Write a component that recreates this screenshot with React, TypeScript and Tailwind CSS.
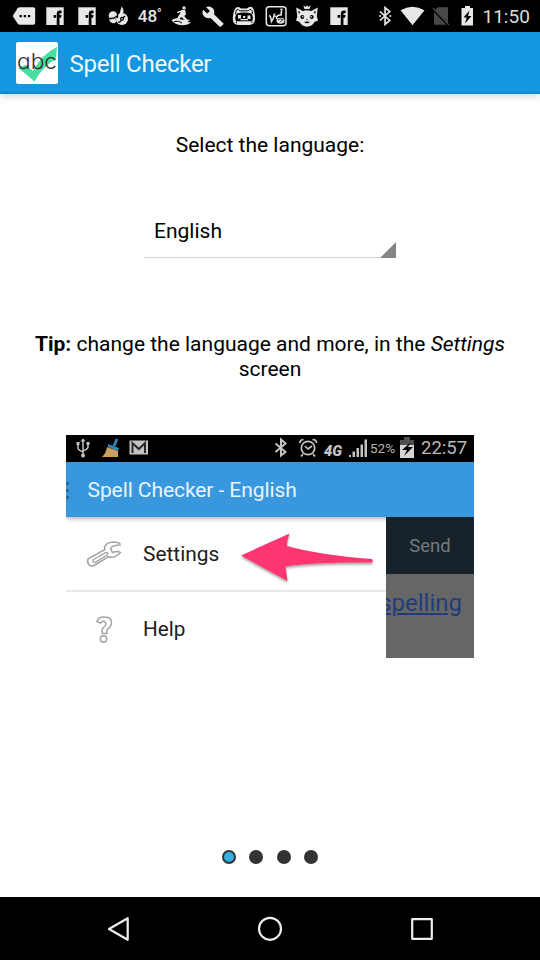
import type { ReactNode } from "react";

const INK = "#e8e8e8";

function Glyph({ children }: { children: ReactNode }) {
  return (
    <div className="flex w-[31.5px] shrink-0 justify-center">
      <svg width="24" height="24" viewBox="0 0 24 24" fill={INK}>
        {children}
      </svg>
    </div>
  );
}

function FacebookGlyph() {
  return (
    <Glyph>
      <path d="M3.300 3.300H20.700V21H3.300Z" />
      <path d="M18.600 7.800h-1.500q-2 0-2 2V21" fill="none" stroke="#000" strokeWidth="2.700" />
      <path d="M10.600 11h2.500v2.800h-2.500zM15 11h3.500l-.4 2.800H15z" fill="#000" />
    </Glyph>
  );
}

function StatusBar() {
  return (
    <div className="flex h-8 shrink-0 items-center bg-black pl-2 text-[#e8e8e8]">
      <Glyph>
        <path d="M.7 12 5.600 4.300Q6.400 3.200 8 3.200H21.200q2 0 2 2V18.700q0 2-2 2H8q-1.600 0-2.400-1.200Z" />
        <path d="M7.500 11h2.300v2.300h-2.300zM11.700 11h2.300v2.300h-2.300zM15.900 11h2.300v2.300h-2.300z" fill="#000" />
      </Glyph>
      <FacebookGlyph />
      <FacebookGlyph />
      <Glyph>
        <circle cx="7" cy="11.500" r="4.300" />
        <circle cx="16" cy="15" r="6" />
        <path d="M13.500 10 15.500 2.500q3.200 3.200 1.300 7.500z" />
        <path d="M3 15.500q2 4.800 6 3.500l2-2-2-2z" />
        <path d="M4 14.200q4 1 7-2.200M11.500 9v5M12 18q2.200 1 4-3l3-3" stroke="#000" strokeWidth="1.300" fill="none" />
        <circle cx="16" cy="14.800" r="2" fill="#000" />
        <circle cx="16" cy="14.800" r=".8" />
      </Glyph>
      <div className="flex w-[31.5px] shrink-0 justify-center text-[17px] font-medium leading-6">
        <span>48</span>
        <span className="text-[12px] leading-5">°</span>
      </div>
      <Glyph>
        <circle cx="15" cy="3.900" r="1.700" />
        <path d="M13 6h3.300l.7 4.500-1.800 1.500 3.300 4-1.300 1-5-4-2.500 3-2-.7 3-5.300 1-2-3.200 1.200-.5-1.200z" />
        <path d="M2.500 16q5-3 9-.5l9.500.2-2.500 2.300q2 .5 3.700.2-3 3-9.200 3-7.500-.2-10.500-5.200z" />
        <path d="M5 17.500q5-1.200 8 1.500" stroke="#000" strokeWidth="1" fill="none" />
      </Glyph>
      <Glyph>
        <path d="M22.200 19.200 13 10.200c.8-2.200.2-4.500-1.500-6.100-1.900-1.900-4.500-2.100-6.500-1.100L8.900 6.900 6.200 9.600 2.100 5.700C.9 8 1.400 10.700 3.200 12.600c1.700 1.700 4.200 2.100 6.300 1.300l9 8.700c.5.500 1.100.5 1.500 0l2.200-2.100c.6-.4.600-1 0-1.300z" />
      </Glyph>
      <Glyph>
        <path d="M4 3.500Q7 2 9 4.500h6Q18 1.500 20.500 3.500 22.500 6 23 13q.7 7.500-5.500 8H6.500Q.3 20.500.8 14 1.300 6.500 4 3.500z" />
        <path d="M3.500 10.500Q3.800 5 6 5.300q1 1.500 2.500 1.500h7q1.500 0 2.500-1.500 2.300-.3 2.500 4.500" fill="none" stroke="#000" strokeWidth="1" />
        <path d="M5 9.500Q12 7.500 19.500 9.500 22 13.500 20 17.300H4Q2 13.500 5 9.500z" fill="#000" />
        <path d="M6 11h3v3.500H6zM11 12h2.200v2H11zM15.500 11.500h3v3.500h-3zM8.500 15h7.500v1.300H8.500z" />
        <path d="M4.500 17.700v1.500M20 17.500v1.500" stroke="#000" />
      </Glyph>
      <Glyph>
        <rect x="2.300" y="2.800" width="19.700" height="19" rx="3" fill="none" stroke={INK} strokeWidth="1.500" />
        <path d="M5 11.500q2 .5 2.500 6 2.500-3.500 3-8M17.500 7l-.5 4q-4.500-.5-4.500 4" fill="none" stroke={INK} strokeWidth="1.600" />
        <path d="M12.500 12.300h-2" stroke={INK} strokeWidth="1.500" />
        <circle cx="17.500" cy="5.600" r="1.200" />
        <ellipse cx="16.500" cy="16.800" rx="4" ry="3" />
        <path d="M14 16q2-2.500 5 0M16 18.500l3-3" fill="none" stroke="#000" strokeWidth=".8" />
      </Glyph>
      <Glyph>
        <path d="M1.200 3.500 7.700 7q4.300-1.300 8.600 0L22.800 3.500l-1 9 1.200 4-3.500 1.500Q17 22.500 12 22.700 7 22.500 4.500 18L1 16.500l1.300-4z" />
        <path d="M9.500 5 8.300 1.500l2.700 1.500L12 1l1.200 2L15.800 1.500l-1.300 3.500z" />
        <circle cx="7.300" cy="13" r="2" fill="#000" />
        <circle cx="16.700" cy="13" r="2" fill="#000" />
        <circle cx="7.800" cy="12.700" r=".8" />
        <circle cx="16.200" cy="12.700" r=".8" />
        <path d="M11 15.200h2l-1 1.300zM9 18q3-.8 6 0-3 2.500-6 0z" fill="#000" />
        <path d="m3.300 6.500 2 1.800-1.500 1.700zM20.700 6.500l-2 1.800 1.500 1.700z" fill="#000" />
      </Glyph>
      <FacebookGlyph />
      <svg className="ml-[22px] shrink-0" width="96" height="24" viewBox="0 0 96 24" fill={INK}>
        <path d="M3 7.500 12.700 16.500 8.100 20.500V3.500L12.700 7.500 3 16.500" fill="none" stroke={INK} strokeWidth="1.700" />
        <circle cx="3" cy="12" r="1" />
        <circle cx="13.300" cy="12" r="1" />
        <path d="M23.500 6.300Q35.500-.7 47.500 6.300L35.500 21.300Z" />
        <path d="M61 3.200h10V20.800H57V7z" fill="#484848" />
        <path d="m55 4 17.500 18.500" stroke="#000" strokeWidth="2.500" />
        <path d="m56 4 16 17" stroke="#484848" strokeWidth="1.200" />
        <path d="M88 2h5v2h3v17.500H84.500V4H88z" />
        <path d="M92.500 6.500 86.500 13.500h3.200L88 19.500 94.500 12h-3.400z" fill="#000" />
      </svg>
      <span className="ml-[10px] mt-px text-[19px] leading-6 text-[#dcdcdc]">11:50</span>
    </div>
  );
}

function AppBar() {
  return (
    <header className="flex h-[62px] shrink-0 items-center border-b-2 border-[#1288cb] bg-[#1496e1] pl-4 shadow-[0_2px_8px_rgba(0,0,0,0.18)]">
      <svg className="mt-[2px] shrink-0" width="42" height="42" viewBox="0 0 42 42">
        <rect width="42" height="42" rx="2" fill="#fff" />
        <path d="m2.500 26 6.500-3 8 6Q26 12 41 5L40 17Q27 24 18.500 39.500Z" fill="#49dda0" />
        <text
          x="1"
          y="26.500"
          textLength="40"
          lengthAdjust="spacingAndGlyphs"
          fontSize="21"
          fontWeight="300"
          fill="#303030"
          className="font-['Inter'] [font-feature-settings:'cv11']"
        >
          abc
        </text>
      </svg>
      <h1 className="ml-[11.500px] mt-[3px] text-[24px] leading-7 tracking-[-0.250px] text-[#eef8fe]">Spell Checker</h1>
    </header>
  );
}

function PreviewStatus() {
  return (
    <div className="flex h-[27px] shrink-0 items-center bg-black">
      <svg width="304" height="27" viewBox="0 0 304 27" fill="#c4c4c4" className="shrink-0">
        <path d="M17 4v17M12 9v4q0 2 5 4M22 9v3q0 2-5 4" fill="none" stroke="#c4c4c4" strokeWidth="1.500" />
        <path d="m14.500 6.500 2.500-3 2.500 3zM10.500 7h3v3h-3zM20.500 7h3v3h-3z" />
        <circle cx="17" cy="20.500" r="2" />
        <path d="m51 4-3 7" stroke="#2e7fb8" strokeWidth="3" />
        <path d="m42 9 11 4-1 3-10-4z" fill="#3485ba" />
        <path d="m41 12 11 4v6H36q4-4 5-10z" fill="#c9a061" />
        <path d="M63.500 5.500h18.500v14H63.500z" />
        <path d="M66.500 18V8l6.300 6L79 8v10" fill="none" stroke="#282828" strokeWidth="2" />
        <path d="M209.500 8.500 219.500 17 215 20.500V4.500L219.500 8.500 209.500 17" fill="none" stroke="#c4c4c4" strokeWidth="2" />
        <circle cx="242" cy="13" r="6.700" fill="none" stroke="#c4c4c4" strokeWidth="1.700" />
        <path d="m239 11 3 3 4-3M233.500 8q1-3.500 4-3.500M246.500 4.500q4 0 4 3.500M237 19l-2 2.500M247 19l2 2.500" fill="none" stroke="#c4c4c4" strokeWidth="1.700" />
        <text x="258" y="21" fontSize="14" fontWeight="900" fontStyle="italic" textLength="18" lengthAdjust="spacingAndGlyphs">
          4G
        </text>
        <path d="M283 20h2v2h-2zM286.500 16.500h2.500V22h-2.500zM290.500 13h2.500v9h-2.500zM294.500 9.500h2.500V22h-2.500zM298.500 4.500h2.500V22h-2.500z" />
      </svg>
      <span className="text-[13.500px] text-[#b5b5b5]">52%</span>
      <svg width="16" height="23" viewBox="0 0 16 23" className="ml-[4px] shrink-0">
        <path d="M5 0h6v3h4v7H1V3h4z" fill="#505050" />
        <path d="M1 8h14v13H1z" fill="#d5d5d5" />
        <path d="m12 5-9 8h5l-3 6 9-9H9z" fill="#000" />
      </svg>
      <span className="ml-[6px] text-[18.500px] text-[#b8b8b8]">22:57</span>
    </div>
  );
}

function MenuPreview() {
  return (
    <section className="mx-auto mt-[53px] flex h-[223px] w-[408px] shrink-0 flex-col overflow-hidden">
      <PreviewStatus />
      <div className="flex h-[55px] shrink-0 items-center bg-[#3998dd] shadow-[0_1px_5px_rgba(0,0,0,0.4)]">
        <div className="mt-px flex w-[3px] flex-col gap-[4px]">
          <i className="h-[3px] bg-[#2a6b9b]" />
          <i className="h-[3px] bg-[#2a6b9b]" />
          <i className="h-[3px] bg-[#2a6b9b]" />
        </div>
        <span className="ml-[18.500px] mt-[2px] text-[21px] tracking-[-0.080px] text-[#e9f3fa]">Spell Checker - English</span>
      </div>
      <div className="flex h-[141px] shrink-0">
        <div className="flex w-[320px] flex-col">
          <div className="flex h-[75px] shrink-0 items-center border-b-2 border-[#e8e8e8]">
            <svg width="320" height="73" viewBox="0 0 320 73" className="-mr-[243px] shrink-0">
              <defs>
                <filter id="arrowShade" x="-10%" y="-20%" width="120%" height="150%">
                  <feDropShadow dx="0" dy="2" stdDeviation="1.200" floodColor="#000" floodOpacity=".35" />
                </filter>
              </defs>
              <path
                d="M22.500 41.500Q20.500 44 22.500 47Q24.500 50.200 29 48L42.500 39.500Q47 41.500 51 38.500L54.500 35.500Q51.500 33.500 46.500 35.500L44.500 31.500Q47 27.800 54 28Q55 25.500 48 25Q40 25 38.500 30.500L39 32.500Z"
                fill="none"
                stroke="#a3a3a3"
                strokeWidth="1.500"
              />
              <path d="M27.500 42.500 40 35.500q3 0 1 2.500L29 45.500q-3.500 0-1.500-3z" fill="none" stroke="#a3a3a3" strokeWidth="1.400" />
              <path
                d="M175 38.500 223.500 16.500Q221 23 221 29Q253 38 306 42Q307.500 43.500 306 45.500Q250 45 219.500 49.500L221.500 64Z"
                fill="#fd3470"
                filter="url(#arrowShade)"
              />
            </svg>
            <span className="mt-[3px] text-[20.900px] text-[#202020]">Settings</span>
          </div>
          <div className="flex h-[74px] shrink-0 items-center">
            <svg width="77" height="34" viewBox="0 0 77 34" className="mt-[-1px] shrink-0">
              <path
                d="M31 9.500Q32 5 38 5Q45.500 5 45.500 10.500Q45.500 14 41.500 17.500Q40 19 41 21.500H36.500Q35 18 37.500 15.500Q41 12.500 39.500 10.500Q37 8 34.500 11Z"
                fill="none"
                stroke="#a3a3a3"
                strokeWidth="1.500"
              />
              <circle cx="37.500" cy="27" r="3.200" fill="none" stroke="#a3a3a3" strokeWidth="1.500" />
            </svg>
            <span className="mt-[2px] text-[20.700px] text-[#202020]">Help</span>
          </div>
        </div>
        <div className="flex w-[88px] flex-col overflow-hidden bg-[#666]">
          <div className="flex h-[57px] shrink-0 items-center justify-center bg-[#17222a] pt-[2px] text-[18.500px] text-[#737a7e]">Send</div>
          <div className="mt-[13px] flex justify-end pr-3 text-[24px] leading-8 text-[#213c7c] underline decoration-2 underline-offset-2">
            <span>spelling</span>
          </div>
        </div>
      </div>
    </section>
  );
}

export default function App() {
  return (
    <div className="flex h-[960px] w-[540px] flex-col overflow-hidden bg-white font-['Roboto','Liberation_Sans',sans-serif] text-black">
      <StatusBar />
      <AppBar />
      <main className="flex flex-1 flex-col">
        <p className="mt-[39px] text-center text-[21px] leading-[25px]">Select the language:</p>
        <div className="mx-auto mt-[42px] flex h-[58px] w-[252px] items-end justify-between border-b border-[#d2d2d2]">
          <span className="self-center pl-[10px] pt-[5px] text-[21px] leading-[25px]">English</span>
          <svg width="16" height="16" viewBox="0 0 16 16" className="-mb-px">
            <path d="M16 0v16H0z" fill="#858585" />
          </svg>
        </div>
        <p className="mt-[74px] px-6 text-center text-[21px] leading-[25px]">
          <b>Tip:</b> change the language and more, in the <em>Settings</em> screen
        </p>
        <MenuPreview />
        <div className="mb-[33px] mt-auto flex justify-center gap-[13.400px]">
          <i className="size-[14px] rounded-full border-2 border-[#333] bg-[#33aee3]" />
          <i className="size-[14px] rounded-full bg-[#333]" />
          <i className="size-[14px] rounded-full bg-[#333]" />
          <i className="size-[14px] rounded-full bg-[#333]" />
        </div>
      </main>
      <nav className="flex h-[63px] shrink-0 justify-center bg-black">
        <svg width="360" height="63" viewBox="0 0 360 63" fill="none" stroke="#eee" strokeWidth="2.200" strokeLinejoin="round">
          <path d="M37.700 21.200V42.800L19 32Z" />
          <circle cx="180" cy="31.800" r="11" />
          <rect x="322.200" y="22.200" width="19.600" height="19.600" />
        </svg>
      </nav>
    </div>
  );
}
